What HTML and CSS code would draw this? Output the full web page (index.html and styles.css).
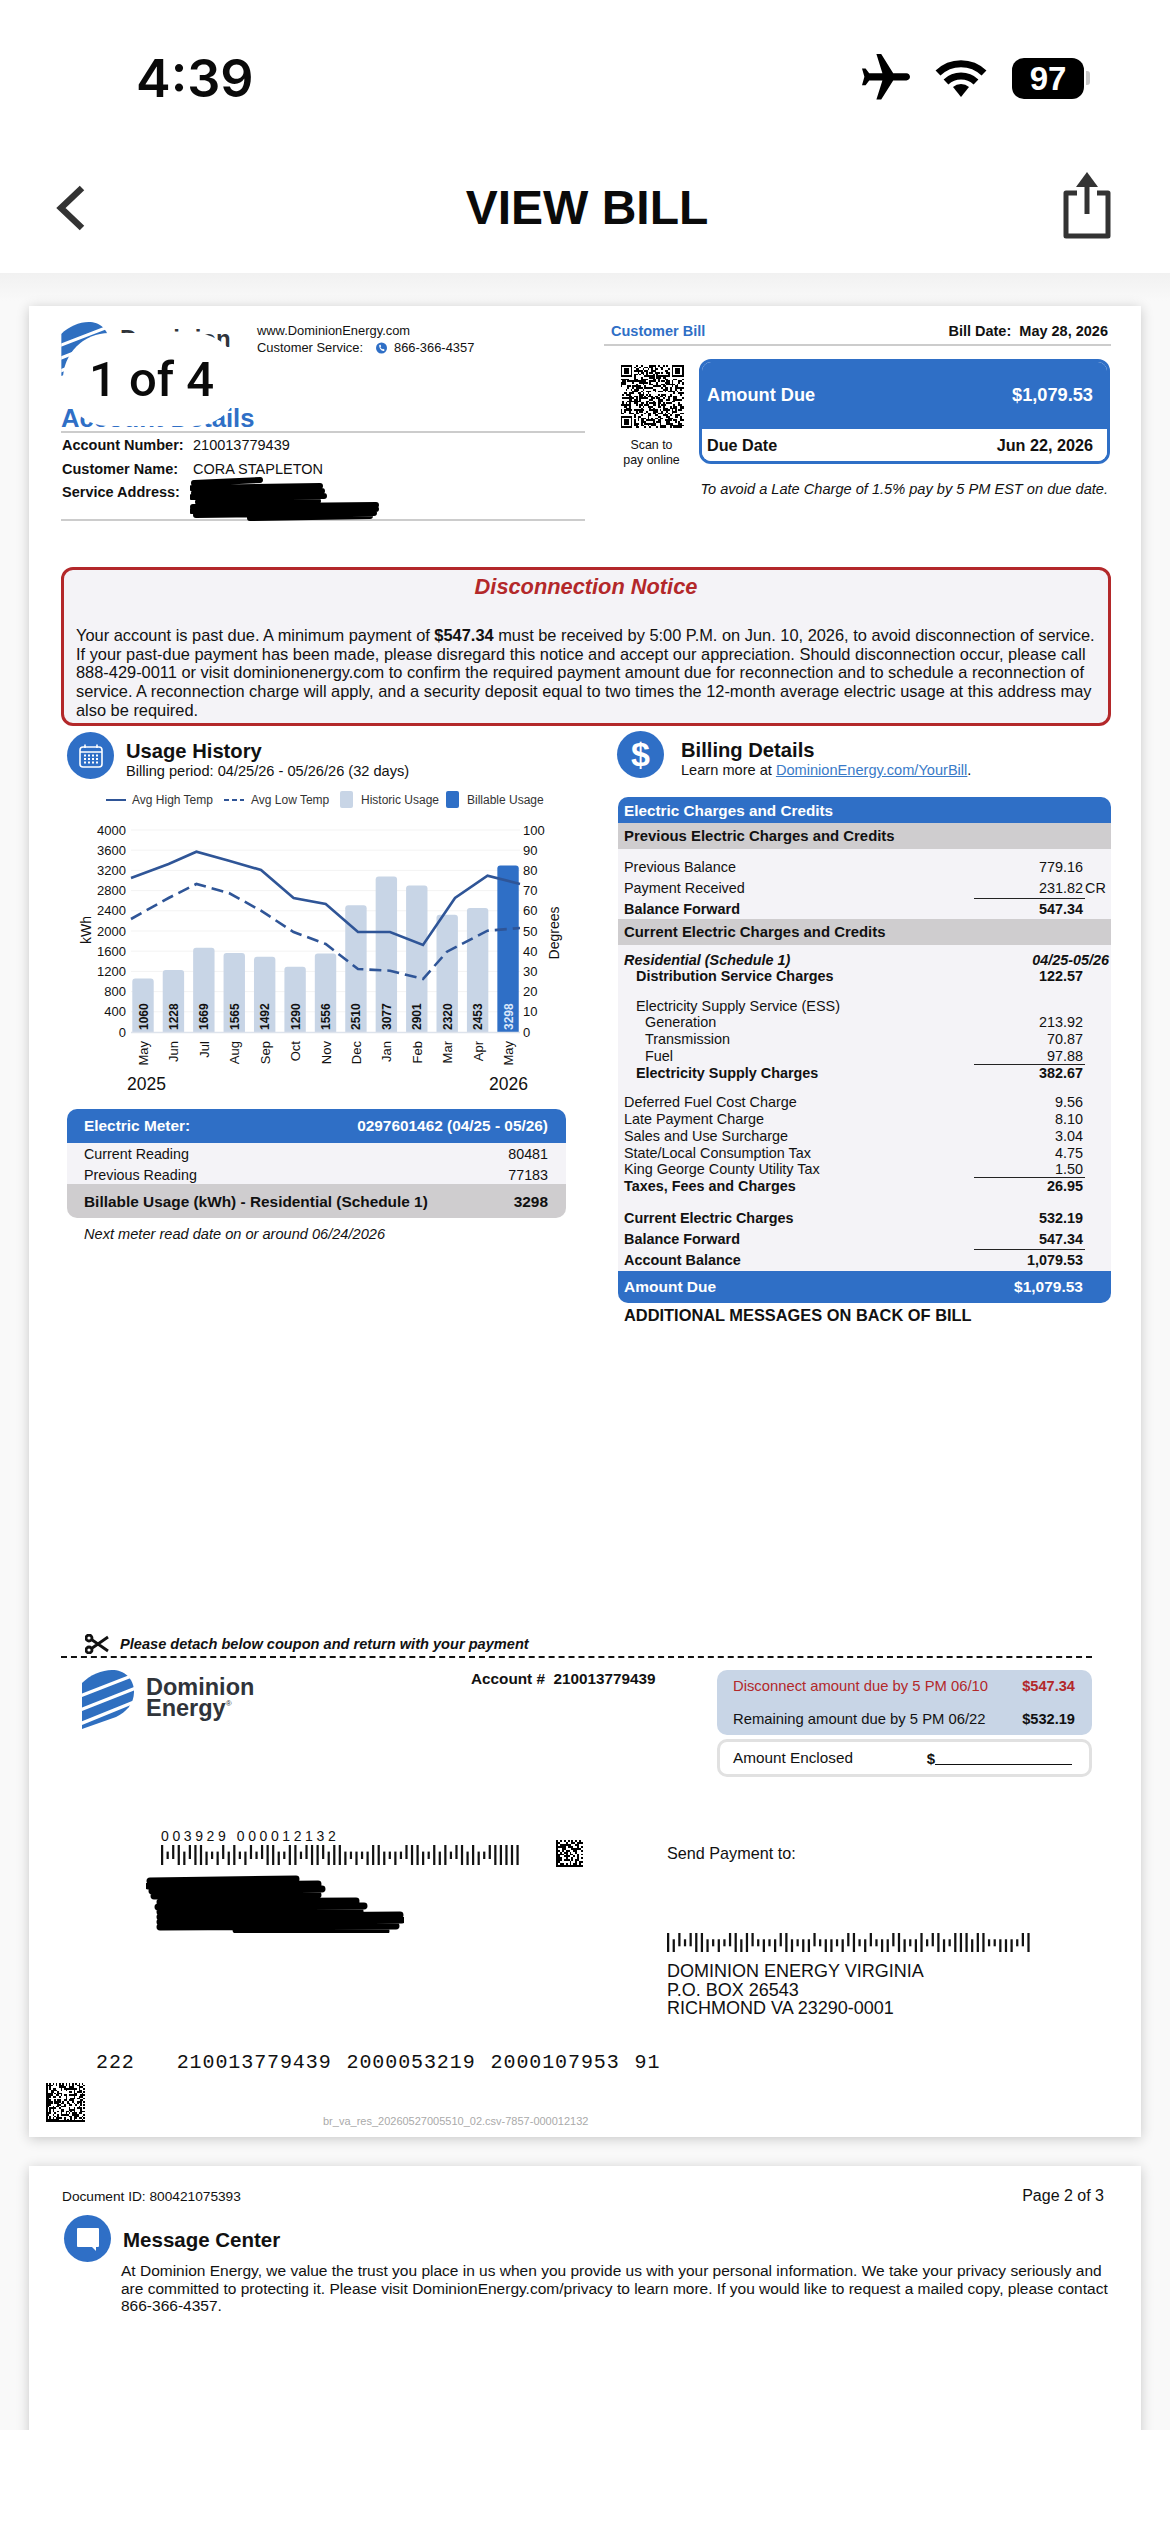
FILE: index.html
```html
<!DOCTYPE html>
<html lang="en">
<head>
    <meta charset="UTF-8">
    <meta name="viewport" content="width=device-width, initial-scale=1.0">
    <title>View Bill</title>
    <link rel="stylesheet" href="styles.css">
</head>
<body>

<header class="topbar">
    <div class="status">
        <span class="time">4:39</span>
        <div class="status-icons">
            <svg class="plane" viewBox="2 2 20 20"><path transform="rotate(90 12 12)" d="M21 16v-2l-8-5V3.5c0-.83-.67-1.5-1.5-1.5S10 2.67 10 3.5V9l-8 5v2l8-2.5V19l-2 1.5V22l3.5-1 3.5 1v-1.5L13 19v-5.5l8 2.5z"/></svg>
            <svg class="wifi" viewBox="0 0 52 40">
                <path d="M3 15 A33 33 0 0 1 49 15" />
                <path d="M11 24 A22 22 0 0 1 41 24" />
                <path class="wifi-dot" d="M18 29 A12 12 0 0 1 34 29 L26 39 Z" />
            </svg>
            <span class="battery">97</span>
            <span class="battery-cap"></span>
        </div>
    </div>
    <nav class="nav">
        <svg class="back" viewBox="0 0 30 46"><polyline points="26,3 5,23 26,43"/></svg>
        <h1>VIEW BILL</h1>
        <svg class="share" viewBox="0 0 50 68">
            <path class="share-box" d="M15 21 H4 V64 H46 V21 H35"/>
            <path class="share-box" d="M25 8 V42"/>
            <path d="M25 0 L36 15 H14 Z"/>
        </svg>
    </nav>
</header>

<main class="viewer">
    <section class="sheet sheet-one">
        <div class="page-pill">1 of 4</div>

        <div class="bill-head">
            <div class="head-left">
                <div class="brand-row">
                    <div class="logo logo-top">
                        <svg class="logo-mark" viewBox="0 0 52 59"><use href="#mark"/></svg>
                        <div class="logo-text">Dominion<br>Energy</div>
                    </div>
                    <div class="contact">
                        <div>www.DominionEnergy.com</div>
                        <div class="contact-phone">
                            <span>Customer Service:</span>
                            <svg class="phone" viewBox="0 0 12 12"><circle cx="6" cy="6" r="6"/><path d="M3.6 2.8 L5 2.4 L5.6 4.4 L4.8 5 C5 6 5.8 7 6.8 7.4 L7.6 6.8 L9.4 7.8 L8.8 9.2 C6 9.8 3 6 3.6 2.8Z"/></svg>
                            <span>866-366-4357</span>
                        </div>
                    </div>
                </div>
                <h2 class="acct-title">Account Details</h2>
                <div class="acct">
                    <div class="acct-row"><b>Account Number:</b><span class="acct-num">210013779439</span></div>
                    <div class="acct-row"><b>Customer Name:</b><span>CORA STAPLETON</span></div>
                    <div class="acct-row"><b>Service Address:</b></div>
                    <svg class="redact redact-top" viewBox="0 0 190 44">
                        <path d="M4 6 L70 3 M2 11 L130 9 M4 16 L132 14 M2 20 L134 19 M8 25 L128 24"/>
                        <path d="M3 30 L186 28 M2 34 L186 32 M6 38 L184 36 M60 41 L180 39"/>
                    </svg>
                </div>
            </div>
            <div class="head-right">
                <div class="bill-top">
                    <span class="bill-label">Customer Bill</span>
                    <b>Bill Date:&nbsp; May 28, 2026</b>
                </div>
                <div class="due-row">
                    <div class="scan">
                        <svg class="code qr" data-size="37" data-seed="7" data-kind="qr"></svg>
                        <div>Scan to<br>pay online</div>
                    </div>
                    <div class="due-box">
                        <div class="due-amount"><span>Amount Due</span><span>$1,079.53</span></div>
                        <div class="due-date"><span>Due Date</span><span>Jun 22, 2026</span></div>
                    </div>
                </div>
                <p class="late-note">To avoid a Late Charge of 1.5% pay by 5 PM EST on due date.</p>
            </div>
        </div>

        <div class="notice">
            <h3>Disconnection Notice</h3>
            <p>Your account is past due. A minimum payment of <b>$547.34</b> must be received by 5:00 P.M. on Jun. 10, 2026, to avoid disconnection of service.<br>
            If your past-due payment has been made, please disregard this notice and accept our appreciation. Should disconnection occur, please call<br>
            888-429-0011 or visit dominionenergy.com to confirm the required payment amount due for reconnection and to schedule a reconnection of<br>
            service. A reconnection charge will apply, and a security deposit equal to two times the 12-month average electric usage at this address may<br>
            also be required.</p>
        </div>

        <div class="details">
            <div class="usage">
                <div class="section-head">
                    <span class="round-icon">
                        <svg class="calendar" viewBox="0 0 26 26">
                            <rect x="2" y="4" width="22" height="20" rx="3"/>
                            <path d="M2 9 H24 M7 1.5 V5 M19 1.5 V5"/>
                            <path class="cal-dots" d="M6 12.5h2M10 12.5h2M14 12.5h2M18 12.5h2M6 16h2M10 16h2M14 16h2M18 16h2M6 19.5h2M10 19.5h2M14 19.5h2M18 19.5h2"/>
                        </svg>
                    </span>
                    <div class="head-text">
                        <div class="head-title">Usage History</div>
                        <div class="head-sub">Billing period: 04/25/26 - 05/26/26 (32 days)</div>
                    </div>
                </div>
                <svg id="usage-chart" class="chart" viewBox="61 784 524 316"></svg>
                <div class="meter">
                    <div class="meter-head"><span>Electric Meter:</span><span>0297601462 (04/25 - 05/26)</span></div>
                    <div class="meter-rows">
                        <div class="meter-row"><span>Current Reading</span><span>80481</span></div>
                        <div class="meter-row"><span>Previous Reading</span><span>77183</span></div>
                    </div>
                    <div class="meter-total"><span>Billable Usage (kWh) - Residential (Schedule 1)</span><span>3298</span></div>
                </div>
                <p class="meter-note">Next meter read date on or around 06/24/2026</p>
            </div>

            <div class="billing">
                <div class="section-head section-head-wide">
                    <span class="round-icon dollar">$</span>
                    <div class="head-text">
                        <div class="head-title">Billing Details</div>
                        <div class="head-sub">Learn more at <a href="#">DominionEnergy.com/YourBill</a>.</div>
                    </div>
                </div>
                <div class="charges">
                    <div class="charges-head">Electric Charges and Credits</div>
                    <div class="charges-sub">Previous Electric Charges and Credits</div>
                    <div class="group group-first">
                        <div class="line tall"><span>Previous Balance</span><span class="amt">779.16</span></div>
                        <div class="line tall"><span>Payment Received</span><span class="amt rule">231.82<i class="cr">CR</i></span></div>
                        <div class="line tall strong"><span>Balance Forward</span><span class="amt">547.34</span></div>
                    </div>
                    <div class="charges-sub">Current Electric Charges and Credits</div>
                    <div class="group group-current">
                        <div class="line strong slant"><span>Residential (Schedule 1)</span><span class="period">04/25-05/26</span></div>
                        <div class="line strong in1"><span>Distribution Service Charges</span><span class="amt">122.57</span></div>
                        <div class="line in1 gap"><span>Electricity Supply Service (ESS)</span></div>
                        <div class="line in2"><span>Generation</span><span class="amt">213.92</span></div>
                        <div class="line in2"><span>Transmission</span><span class="amt">70.87</span></div>
                        <div class="line in2"><span>Fuel</span><span class="amt rule">97.88</span></div>
                        <div class="line strong in1"><span>Electricity Supply Charges</span><span class="amt">382.67</span></div>
                        <div class="line gap"><span>Deferred Fuel Cost Charge</span><span class="amt">9.56</span></div>
                        <div class="line"><span>Late Payment Charge</span><span class="amt">8.10</span></div>
                        <div class="line"><span>Sales and Use Surcharge</span><span class="amt">3.04</span></div>
                        <div class="line"><span>State/Local Consumption Tax</span><span class="amt">4.75</span></div>
                        <div class="line"><span>King George County Utility Tax</span><span class="amt rule">1.50</span></div>
                        <div class="line strong"><span>Taxes, Fees and Charges</span><span class="amt">26.95</span></div>
                        <div class="line tall strong gap"><span>Current Electric Charges</span><span class="amt">532.19</span></div>
                        <div class="line tall strong"><span>Balance Forward</span><span class="amt rule">547.34</span></div>
                        <div class="line tall strong"><span>Account Balance</span><span class="amt">1,079.53</span></div>
                    </div>
                    <div class="charges-due"><span>Amount Due</span><span class="amt">$1,079.53</span></div>
                </div>
                <div class="more-msgs">ADDITIONAL MESSAGES ON BACK OF BILL</div>
            </div>
        </div>

        <div class="detach">
            <svg class="scissors" viewBox="0 0 24 20">
                <circle cx="4" cy="4" r="3"/><circle cx="4" cy="16" r="3"/>
                <path d="M6.5 5.5 L23 17 M6.5 14.5 L23 3"/>
            </svg>
            <span>Please detach below coupon and return with your payment</span>
        </div>

        <div class="coupon">
            <div class="logo logo-coupon">
                <svg class="logo-mark" viewBox="0 0 52 59"><use href="#mark"/></svg>
                <div class="logo-text">Dominion<br>Energy<sup>®</sup></div>
            </div>
            <div class="coupon-acct">Account #&nbsp; 210013779439</div>
            <div class="pay">
                <div class="pay-box">
                    <div class="pay-row pay-red"><span>Disconnect amount due by 5 PM 06/10</span><b>$547.34</b></div>
                    <div class="pay-row"><span>Remaining amount due by 5 PM 06/22</span><b>$532.19</b></div>
                </div>
                <div class="enclosed"><span>Amount Enclosed</span><b>$</b><span class="blank"></span></div>
            </div>
        </div>

        <div class="mail">
            <div class="mail-left">
                <div class="mail-codes">
                    <div>
                        <div class="seq">003929 000012132</div>
                        <svg class="bars bars-left" data-bars="FTAFDAFFDTDADFTDATAFFDTFFTAFFADFFDTDTDFFDTDTAFFDTFDFTAFDFDTAFFFFF"></svg>
                    </div>
                    <svg class="code matrix-small" data-size="14" data-seed="23" data-kind="matrix"></svg>
                </div>
                <svg class="redact redact-mail" viewBox="0 0 258 58">
                    <path d="M4 6 L150 4 M2 11 L172 9 M6 16 L176 14 M8 21 L172 20"/>
                    <path d="M14 27 L210 26 M12 32 L218 31 M14 37 L214 36 M14 42 L254 40 M14 47 L256 45 M14 52 L250 51 M90 55 L240 56"/>
                </svg>
            </div>
            <div class="mail-right">
                <div class="send-to">Send Payment to:</div>
                <svg class="bars bars-right" data-bars="FDATAFFDTDTAFDFATDTDAFDTDDATDDTDAFTDATDDAFDTDFTAFDTFFFDFFTTDDDTAF"></svg>
                <address>DOMINION ENERGY VIRGINIA<br>P.O. BOX 26543<br>RICHMOND VA 23290-0001</address>
            </div>
        </div>

        <div class="scanline">
            <span>222</span><span class="scan-acct">210013779439</span><span>2000053219</span><span>2000107953</span><span>91</span>
        </div>

        <div class="sheet-foot">
            <svg class="code matrix-big" data-size="24" data-seed="41" data-kind="matrix"></svg>
            <span class="file-ref">br_va_res_20260527005510_02.csv-7857-000012132</span>
        </div>
    </section>

    <section class="sheet sheet-two">
        <div class="doc-row"><span class="doc-id">Document ID: 800421075393</span><span class="page-no">Page 2 of 3</span></div>
        <div class="msg-head">
            <span class="round-icon">
                <svg class="bubble" viewBox="0 0 26 26"><path d="M3 2 H23 A1 1 0 0 1 24 3 V20 A1 1 0 0 1 23 21 H21 V25 L17 21 H3 A1 1 0 0 1 2 20 V3 A1 1 0 0 1 3 2Z"/></svg>
            </span>
            <span class="msg-title">Message Center</span>
        </div>
        <p class="msg-body">At Dominion Energy, we value the trust you place in us when you provide us with your personal information. We take your privacy seriously and<br>
        are committed to protecting it. Please visit DominionEnergy.com/privacy to learn more. If you would like to request a mailed copy, please contact<br>
        866-366-4357.</p>
    </section>
</main>

<svg class="defs" width="0" height="0">
    <symbol id="mark" viewBox="0 0 52 59">
        <path fill="#2f6fc0" d="M0 13 C8 5 20 0 30 0 C42 0 52 8 52 22 C52 34 44 42 34 47 L0 59 Z"/>
        <path fill="none" stroke="#fff" stroke-width="3.4" d="M-2 26 L52 5 M-2 40 L54 18 M-2 54 L52 32"/>
    </symbol>
</svg>

<script src="bill.js"></script>
</body>
</html>
```

FILE: styles.css
```css
* {
    margin: 0;
    padding: 0;
    box-sizing: border-box;
}

html, body {
    width: 1170px;
    height: 2532px;
    overflow: hidden;
}

body {
    font-family: "Liberation Sans", Arial, sans-serif;
    color: #111;
    background-color: #fff;
}

.defs {
    position: absolute;
}

/* Top bar */
.topbar {
    height: 273px;
    background-color: #fff;
}

.status {
    display: flex;
    align-items: center;
    height: 156px;
    padding: 0 80px 0 136px;
}

.time {
    font-family: Inter, "Liberation Sans", sans-serif;
    font-size: 52px;
    font-weight: 600;
    color: #0a0a0a;
}

.status-icons {
    display: flex;
    align-items: center;
    margin-left: auto;
}

.plane {
    width: 48px;
    height: 48px;
}

.wifi {
    width: 52px;
    height: 40px;
    margin-left: 25px;
    fill: none;
    stroke: #000;
    stroke-width: 7;
}

.wifi-dot {
    fill: #000;
    stroke: none;
}

.battery {
    width: 72px;
    height: 41px;
    margin-left: 25px;
    border-radius: 12px;
    background-color: #000;
    color: #fff;
    font-size: 33px;
    font-weight: bold;
    line-height: 41px;
    text-align: center;
}

.battery-cap {
    width: 4px;
    height: 14px;
    margin-left: 2px;
    border-radius: 0 3px 3px 0;
    background-color: #c8c8c8;
}

.nav {
    display: flex;
    align-items: center;
    justify-content: space-between;
    height: 117px;
    padding: 0 58px 14px 56px;
    position: relative;
}

.nav h1 {
    margin-left: 26px;
    font-size: 48px;
    line-height: 56px;
    color: #0a0a0a;
}

.back {
    width: 30px;
    height: 46px;
    fill: none;
    stroke: #333;
    stroke-width: 6.5;
}

.share {
    width: 50px;
    height: 68px;
    margin-top: -4px;
    fill: #333;
}

.share-box {
    fill: none;
    stroke: #333;
    stroke-width: 5;
    stroke-linejoin: round;
}

/* Document viewer */
.viewer {
    height: 2157px;
    padding: 33px 29px 0;
    overflow: hidden;
    background: linear-gradient(#f1f1f1, #f9f9f9 28px);
}

.sheet {
    position: relative;
    background-color: #fff;
    box-shadow: 0 2px 12px rgba(0, 0, 0, 0.2);
}

.sheet-one {
    height: 1831px;
    padding: 16px 30px 0 32px;
}

.sheet-two {
    height: 400px;
    margin-top: 29px;
    padding: 20px 37px 0 33px;
}

.page-pill {
    position: absolute;
    left: 34px;
    top: 27px;
    width: 177px;
    height: 93px;
    border-radius: 46px;
    background-color: #fff;
    color: #0a0a0a;
    font-family: Roboto, "Liberation Sans", sans-serif;
    font-size: 49px;
    font-weight: 500;
    line-height: 93px;
    text-align: center;
    z-index: 2;
}

/* Bill header */
.bill-head {
    display: grid;
    grid-template-columns: 524px 507px;
    column-gap: 19px;
}

.brand-row {
    display: flex;
    height: 81px;
}

.logo {
    display: flex;
    color: #30343a;
    font-weight: bold;
}

.logo-top {
    width: 196px;
}

.logo-top .logo-mark {
    width: 48px;
    height: 54px;
}

.logo-top .logo-text {
    margin: 6px 0 0 11px;
    font-size: 24px;
    line-height: 21px;
}

.contact {
    padding-top: 1px;
    font-size: 12.9px;
    line-height: 16.5px;
}

.contact-phone {
    display: flex;
    align-items: center;
}

.phone {
    width: 11px;
    height: 12px;
    margin: 0 7px 0 13px;
    fill: #2f6fc6;
}

.phone path {
    fill: #fff;
}

.acct-title {
    height: 30px;
    border-bottom: 2px solid #ccc;
    color: #2f6fc6;
    font-size: 25.6px;
    line-height: 30px;
}

.acct {
    position: relative;
    height: 88px;
    padding: 1px 0 0 1px;
    border-bottom: 2px solid #ccc;
}

.acct-row {
    display: flex;
    height: 23.5px;
    font-size: 14.5px;
    line-height: 23.5px;
}

.acct-row b {
    width: 131px;
}

.redact {
    display: block;
    fill: none;
    stroke: #000;
    stroke-width: 6;
    stroke-linecap: round;
}

.redact-top {
    position: absolute;
    left: 129px;
    top: 44px;
    width: 190px;
    height: 44px;
}

.bill-top {
    display: flex;
    justify-content: space-between;
    height: 24px;
    padding: 0 3px 0 7px;
    border-bottom: 2px solid #ccc;
    font-size: 14.5px;
    line-height: 18px;
}

.bill-label {
    color: #2f6fc6;
    font-weight: bold;
}

.due-row {
    display: flex;
    margin-top: 13px;
}

.scan {
    width: 95px;
    padding-top: 6px;
    font-size: 12.4px;
    line-height: 15px;
    text-align: center;
}

.qr {
    display: block;
    width: 64px;
    height: 63px;
    margin: 0 auto 10px;
}

.due-box {
    width: 411px;
    height: 105px;
    border: 3px solid #2f6fc6;
    border-radius: 12px;
    overflow: hidden;
    font-weight: bold;
}

.due-amount, .due-date {
    display: flex;
    align-items: center;
    justify-content: space-between;
    padding: 0 14px 0 5px;
}

.due-amount {
    height: 67px;
    background-color: #2f6fc6;
    color: #fff;
    font-size: 18.2px;
}

.due-date {
    height: 32px;
    font-size: 16.2px;
    background-color: #fff;
}

.late-note {
    margin-top: 12px;
    padding-right: 3px;
    font-size: 14.6px;
    font-style: italic;
    line-height: 18px;
    text-align: right;
    white-space: nowrap;
}

/* Disconnection notice */
.notice {
    height: 159px;
    margin-top: 46px;
    padding: 3px 12px 0;
    border: 3px solid #b3282a;
    border-radius: 12px;
    background-color: #f4f3f7;
}

.notice h3 {
    color: #b3282a;
    font-size: 21.8px;
    font-style: italic;
    line-height: 28px;
    text-align: center;
}

.notice p {
    margin-top: 25px;
    font-size: 16.4px;
    line-height: 18.7px;
    white-space: nowrap;
}

/* Usage and billing columns */
.details {
    display: grid;
    grid-template-columns: 524px 507px;
    column-gap: 19px;
    margin-top: 5px;
}

.usage {
    padding: 1px 19px 0 6px;
}

.billing {
    padding-left: 13px;
}

.section-head {
    display: flex;
    gap: 12px;
    height: 47px;
}

.section-head-wide {
    gap: 17px;
}

.round-icon {
    display: flex;
    align-items: center;
    justify-content: center;
    width: 47px;
    height: 47px;
    border-radius: 50%;
    background-color: #2f6fc6;
    flex-shrink: 0;
}

.dollar {
    color: #fff;
    font-size: 34px;
    font-weight: bold;
}

.calendar {
    width: 26px;
    height: 26px;
    fill: none;
    stroke: #fff;
    stroke-width: 1.6;
}

.cal-dots {
    stroke-width: 2;
}

.bubble {
    width: 26px;
    height: 26px;
    fill: #fff;
}

.head-text {
    padding-top: 7px;
}

.head-title {
    font-size: 20.2px;
    font-weight: bold;
    line-height: 24px;
}

.head-sub {
    font-size: 14.6px;
    line-height: 17px;
}

.head-sub a {
    color: #3a7bc8;
}

.chart {
    display: block;
    width: 524px;
    height: 316px;
    margin: 5px 0 0 -6px;
}

.chart text {
    font-size: 13px;
    fill: #111;
}

.chart .legend {
    font-size: 12px;
    fill: #333;
}

.chart .bar-val {
    font-size: 12px;
    font-weight: bold;
}

.chart .bar-val-now {
    fill: #dbe8fa;
}

.chart .axis-name {
    font-size: 14px;
}

.chart .year {
    font-size: 17.5px;
}

.meter {
    margin-top: 9px;
    border-radius: 10px;
    overflow: hidden;
    font-size: 14.3px;
}

.meter-head, .meter-total, .meter-row {
    display: flex;
    justify-content: space-between;
    padding: 0 18px 0 17px;
}

.meter-head, .meter-total {
    align-items: center;
    height: 34px;
    font-size: 15.4px;
    font-weight: bold;
}

.meter-head {
    background-color: #2f6fc6;
    color: #fff;
}

.meter-rows {
    height: 41px;
    background-color: #f4f3f7;
}

.meter-row {
    height: 20.5px;
    line-height: 23px;
}

.meter-total {
    background-color: #cfcdcf;
    padding-top: 2px;
}

.meter-note {
    margin-top: 6px;
    padding-left: 17px;
    font-size: 14.6px;
    font-style: italic;
    line-height: 20px;
}

/* Billing table */
.charges {
    margin: 19px 0 0 1px;
    border-radius: 10px;
    overflow: hidden;
    background-color: #f4f3f7;
    font-size: 14.4px;
}

.charges-head, .charges-sub {
    height: 26px;
    padding-left: 6px;
    font-size: 15.3px;
    font-weight: bold;
    line-height: 27px;
}

.charges-head {
    background-color: #2f6fc6;
    color: #fff;
}

.charges-sub {
    background-color: #cfcdcf;
    font-size: 14.9px;
}

.group {
    padding-left: 6px;
}

.group-first {
    padding-top: 7.5px;
    height: 70px;
}

.group-current {
    padding-top: 6.5px;
    height: 326px;
}

.line {
    display: flex;
    justify-content: space-between;
    height: 16.8px;
    line-height: 17.6px;
}

.line.tall {
    height: 21px;
    line-height: 21.6px;
}

.line.gap {
    margin-top: 12.6px;
}

.strong {
    font-weight: bold;
}

.slant {
    font-style: italic;
}

.in1 {
    padding-left: 12px;
}

.in2 {
    padding-left: 21px;
}

.amt {
    position: relative;
    width: 111px;
    margin-right: 26px;
    padding-right: 2px;
    text-align: right;
}

.period {
    margin-right: 2px;
}

.rule {
    border-bottom: 1.5px solid #222;
}

.cr {
    position: absolute;
    left: 111px;
    font-style: normal;
}

.charges-due {
    display: flex;
    justify-content: space-between;
    align-items: center;
    height: 32px;
    padding-left: 6px;
    background-color: #2f6fc6;
    color: #fff;
    font-size: 15.5px;
    font-weight: bold;
}

.more-msgs {
    margin-top: 2px;
    padding-left: 7px;
    font-size: 16.4px;
    font-weight: bold;
    line-height: 20px;
}

/* Coupon */
.detach {
    display: flex;
    align-items: center;
    gap: 11px;
    height: 25px;
    margin: 308px 19px 0 0;
    padding: 0 0 2px 24px;
    border-bottom: 2px dashed #111;
    font-size: 14.6px;
    font-weight: bold;
    font-style: italic;
}

.scissors {
    width: 24px;
    height: 20px;
    fill: none;
    stroke: #111;
    stroke-width: 2.8;
}

.coupon {
    display: grid;
    grid-template-columns: 410px 246px 375px;
    padding-top: 12px;
}

.logo-coupon {
    padding-left: 21px;
}

.logo-coupon .logo-mark {
    width: 52px;
    height: 59px;
}

.logo-coupon .logo-text {
    margin: 7px 0 0 12px;
    font-size: 23.5px;
    line-height: 21px;
}

.logo-text sup {
    font-size: 8px;
    font-weight: normal;
    vertical-align: top;
    line-height: 12px;
}

.coupon-acct {
    font-size: 15.3px;
    font-weight: bold;
    line-height: 18px;
}

.pay-box {
    height: 65px;
    border-radius: 10px;
    background-color: #c8d5e6;
}

.pay-row {
    display: flex;
    align-items: center;
    justify-content: space-between;
    height: 32.5px;
    padding: 0 17px 0 16px;
    font-size: 14.8px;
}

.pay-row b {
    font-size: 14.6px;
}

.pay-red {
    color: #b3282a;
}

.enclosed {
    display: flex;
    align-items: center;
    height: 38px;
    margin-top: 4px;
    padding: 0 17px 0 13px;
    border: 3px solid #e1e1e1;
    border-radius: 10px;
    font-size: 15.3px;
}

.enclosed b {
    margin-left: auto;
    font-size: 15px;
}

.blank {
    width: 137px;
    height: 14px;
    border-bottom: 1px solid #111;
}

.mail {
    display: grid;
    grid-template-columns: 605px 1fr;
    margin-top: 51px;
}

.mail-left {
    padding-left: 100px;
}

.mail-codes {
    display: flex;
    gap: 34px;
}

.seq {
    font-family: "Liberation Sans", Arial, sans-serif;
    font-size: 14px;
    letter-spacing: 3.6px;
    line-height: 16px;
    white-space: nowrap;
}

.bars {
    display: block;
    width: 361px;
    height: 20px;
    margin-top: 1px;
    fill: #111;
}

.code {
    display: block;
    fill: #000;
    shape-rendering: crispEdges;
}

.matrix-small {
    width: 27px;
    height: 27px;
    margin-top: 12px;
}

.redact-mail {
    width: 258px;
    height: 58px;
    margin: 8px 0 0 -15px;
    stroke-width: 7;
}

.mail-right {
    padding-left: 1px;
}

.send-to {
    padding-top: 16px;
    font-size: 16.2px;
    line-height: 18px;
}

.bars-right {
    width: 366px;
    height: 19px;
    margin-top: 71px;
}

address {
    margin-top: 10px;
    font-size: 18px;
    font-style: normal;
    line-height: 18.7px;
}

.scanline {
    display: flex;
    margin-top: 35px;
    padding-left: 35px;
    font-family: "Liberation Mono", monospace;
    font-size: 20px;
    line-height: 20px;
    letter-spacing: 0.9px;
}

.scanline span {
    margin-right: 15px;
}

.scanline .scan-acct {
    margin-left: 27px;
}

.sheet-foot {
    display: flex;
    margin: 10px 0 0 -15px;
}

.matrix-big {
    width: 39px;
    height: 39px;
}

.file-ref {
    margin: 32px 0 0 238px;
    color: #aaa;
    font-size: 11px;
    line-height: 12px;
    white-space: nowrap;
}

/* Second page */
.doc-row {
    display: flex;
    justify-content: space-between;
    align-items: center;
    height: 20px;
}

.doc-id {
    font-size: 13.7px;
}

.page-no {
    font-size: 16px;
}

.msg-head {
    display: flex;
    align-items: center;
    gap: 12px;
    margin: 9px 0 0 2px;
}

.msg-title {
    font-size: 20.5px;
    font-weight: bold;
    padding-top: 2px;
}

.msg-body {
    margin-left: 59px;
    font-size: 15.5px;
    line-height: 17.7px;
    white-space: nowrap;
}
```

FILE: bill.js
```js
// Usage chart
const months = ["May", "Jun", "Jul", "Aug", "Sep", "Oct", "Nov", "Dec", "Jan", "Feb", "Mar", "Apr", "May"];
const usage = [1060, 1228, 1669, 1565, 1492, 1290, 1556, 2510, 3077, 2901, 2320, 2453, 3298];
const highTemp = "131,878 168.6,864 196.4,851.7 229,860.7 261,870 293.6,898 325.7,904 358,932 390,932 423,945 455,898 487.5,875.7 520,884";
const lowTemp = "131,919 168.6,898 196.4,884 229,893 261,910.7 293.6,932 325.7,944 358,969 390,970.7 423,979 447,951.7 487.5,930.7 520,928";

const baseY = 1032;
const scale = 202 / 4000;
let chart = "";

// Legend
chart += '<path d="M106 800H126" stroke="#2f5597" stroke-width="2"/>';
chart += '<text class="legend" x="132" y="804">Avg High Temp</text>';
chart += '<path d="M224 800H244" stroke="#2f5597" stroke-width="2" stroke-dasharray="5 3"/>';
chart += '<text class="legend" x="251" y="804">Avg Low Temp</text>';
chart += '<rect x="340" y="791" width="13" height="17" rx="2" fill="#c8d5e6"/>';
chart += '<text class="legend" x="361" y="804">Historic Usage</text>';
chart += '<rect x="446" y="791" width="13" height="17" rx="2" fill="#2f6fc6"/>';
chart += '<text class="legend" x="467" y="804">Billable Usage</text>';

// Grid and axis labels
for (let i = 0; i <= 10; i++) {
    const y = baseY - i * 20.2;
    if (i > 0) {
        chart += `<path d="M131 ${y}H520" stroke="#f3f3f3" stroke-width="1"/>`;
    }
    chart += `<text x="126" y="${y + 4.5}" text-anchor="end">${i * 400}</text>`;
    chart += `<text x="523" y="${y + 4.5}">${i * 10}</text>`;
}

// Bars
usage.forEach(function (value, i) {
    const x = 143 + i * 30.42;
    const h = value * scale;
    const last = i === usage.length - 1;
    chart += `<path d="M${x - 10.7} ${baseY}V${baseY - h + 3}q0 -3 3 -3H${x + 7.7}q3 0 3 3V${baseY}Z" fill="${last ? "#2f6fc6" : "#c8d5e6"}"/>`;
    chart += `<text class="bar-val${last ? " bar-val-now" : ""}" transform="rotate(-90 ${x + 4.5} 1030)" x="${x + 4.5}" y="1030">${value}</text>`;
    chart += `<text transform="rotate(-90 ${x + 5} 1041)" x="${x + 5}" y="1041" text-anchor="end">${months[i]}</text>`;
});

chart += '<path d="M131 1032.5H520" stroke="#dde3ec" stroke-width="1.5"/>';
chart += `<polyline points="${highTemp}" fill="none" stroke="#2f5597" stroke-width="2.6"/>`;
chart += `<polyline points="${lowTemp}" fill="none" stroke="#2f5597" stroke-width="2.6" stroke-dasharray="12 6"/>`;

chart += '<text class="axis-name" transform="rotate(-90 91 930)" x="91" y="930" text-anchor="middle">kWh</text>';
chart += '<text class="axis-name" transform="rotate(-90 559 933)" x="559" y="933" text-anchor="middle">Degrees</text>';
chart += '<text class="year" x="127" y="1090">2025</text>';
chart += '<text class="year" x="489" y="1090">2026</text>';

document.getElementById("usage-chart").innerHTML = chart;

// Postal barcodes: F full, A up, D down, T short
document.querySelectorAll(".bars").forEach(function (svg) {
    const codes = svg.dataset.bars;
    const pitch = 100 / codes.length;
    let out = "";
    for (let i = 0; i < codes.length; i++) {
        const c = codes[i];
        const top = c === "F" || c === "A" ? 0 : 33;
        const bottom = c === "F" || c === "D" ? 100 : 70;
        out += `<rect x="${i * pitch}" y="${top}" width="${pitch * 0.4}" height="${bottom - top}"/>`;
    }
    svg.setAttribute("viewBox", "0 0 100 100");
    svg.setAttribute("preserveAspectRatio", "none");
    svg.innerHTML = out;
});

// QR and data matrix look-alikes, seeded so every render is the same
document.querySelectorAll(".code").forEach(function (svg) {
    const size = Number(svg.dataset.size);
    let seed = Number(svg.dataset.seed);
    const next = function () {
        seed = (seed * 1103515245 + 12345) % 2147483648;
        return seed / 2147483648;
    };
    const cells = [];
    for (let y = 0; y < size; y++) {
        cells.push([]);
        for (let x = 0; x < size; x++) {
            cells[y].push(next() > 0.5);
        }
    }
    if (svg.dataset.kind === "qr") {
        [[0, 0], [size - 7, 0], [0, size - 7]].forEach(function (spot) {
            for (let y = -1; y < 8; y++) {
                for (let x = -1; x < 8; x++) {
                    const row = cells[spot[1] + y];
                    if (!row || spot[0] + x < 0 || spot[0] + x >= size) continue;
                    const ring = x === 0 || y === 0 || x === 6 || y === 6;
                    const core = x >= 2 && x <= 4 && y >= 2 && y <= 4;
                    const inside = x >= 0 && y >= 0 && x <= 6 && y <= 6;
                    row[spot[0] + x] = inside && (ring || core);
                }
            }
        });
    } else {
        // solid left and bottom edge, clocked top and right edge
        for (let i = 0; i < size; i++) {
            cells[i][0] = true;
            cells[size - 1][i] = true;
            cells[0][i] = i % 2 === 0;
            cells[i][size - 1] = i % 2 === 1;
        }
    }
    let out = "";
    for (let y = 0; y < size; y++) {
        for (let x = 0; x < size; x++) {
            if (cells[y][x]) out += `<rect x="${x}" y="${y}" width="1" height="1"/>`;
        }
    }
    svg.setAttribute("viewBox", `0 0 ${size} ${size}`);
    svg.innerHTML = out;
});
```
